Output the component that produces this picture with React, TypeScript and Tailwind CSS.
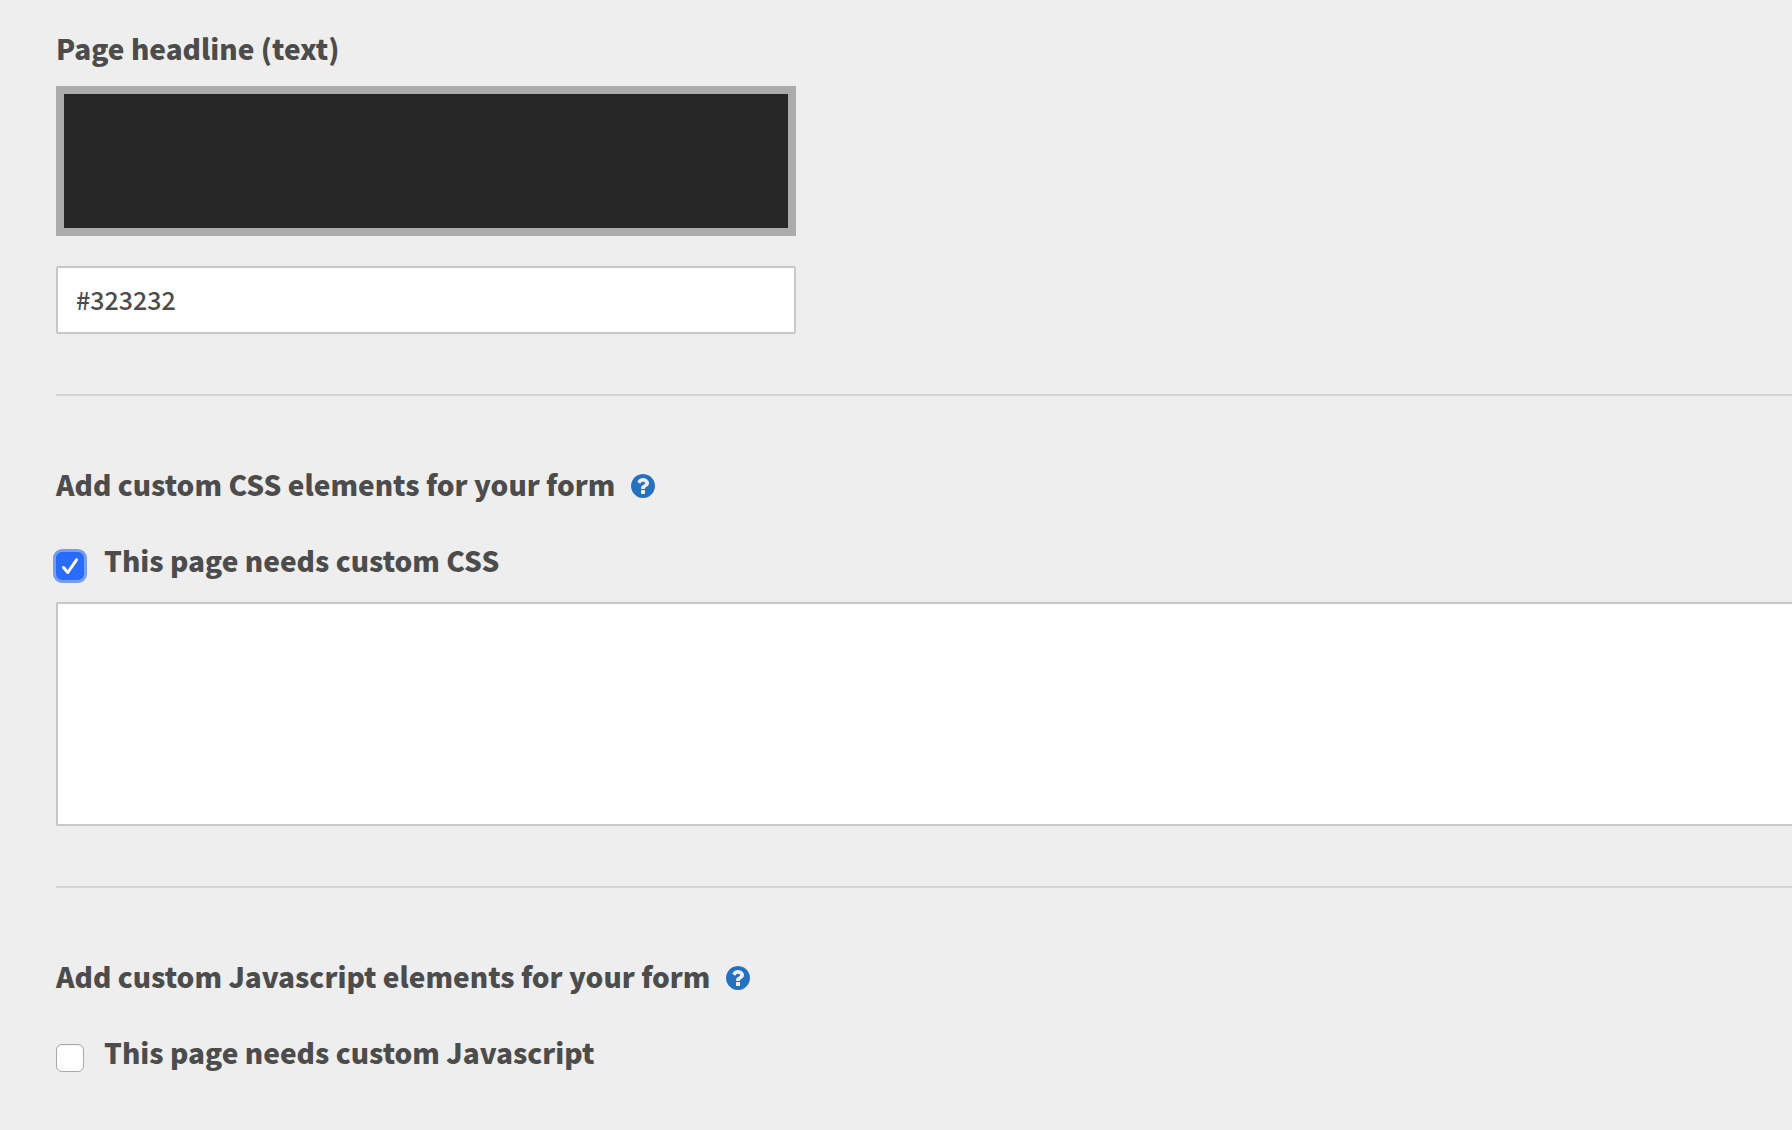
import { useState, type ReactNode } from 'react';

interface CustomCodeSectionProps {
    id: string;
    title: string;
    label: string;
    defaultChecked?: boolean;
}

function HelpIcon() {
    return (
        <svg viewBox="128 128 1536 1536" className="size-6 fill-current" aria-hidden="true">
            <path d="M1024 1376v-192q0-14-9-23t-23-9H800q-14 0-23 9t-9 23v192q0 14 9 23t23 9h192q14 0 23-9t9-23zm256-672q0-88-55.5-163T1086 425t-170-41q-243 0-371 213-15 24 8 42l132 100q7 6 19 6 16 0 25-12 53-68 86-92 34-24 86-24 48 0 85.5 26t37.5 59q0 38-20 61t-68 45q-63 28-115.5 86.5T768 1020v36q0 14 9 23t23 9h192q14 0 23-9t9-23q0-19 21.5-49.5T1100 957q32-18 49-28.5t46-35 44.5-48 28-60.5 12.500-81zm384 192q0 209-103 385.500T1281.500 1561 896 1664t-385.500-103T231 1281.500 128 896t103-385.500T510.500 231 896 128t385.500 103T1561 510.500 1664 896z" />
        </svg>
    );
}

function Section({ children }: { children: ReactNode }) {
    return <section className="mt-15 border-t-2 border-[#d4d4d4] pt-17">{children}</section>;
}

function CustomCodeSection({ id, title, label, defaultChecked = false }: CustomCodeSectionProps) {
    const [enabled, setEnabled] = useState(defaultChecked);

    return (
        <Section>
            <div className="flex items-center gap-4">
                <h2 className="font-black">{title}</h2>
                <button type="button" aria-label={`Help: ${title}`} className="pt-1 text-[#2571c0]">
                    <HelpIcon />
                </button>
            </div>
            <div className="mt-9 flex items-end gap-5">
                <span className="grid size-7">
                    <input
                        id={id}
                        type="checkbox"
                        checked={enabled}
                        onChange={(e) => setEnabled(e.target.checked)}
                        className="peer col-start-1 row-start-1 size-7 appearance-none rounded-md border border-[#a8a8a8] bg-white outline-none inset-shadow-xs checked:border-[#296cfb] checked:bg-[#296cfb] checked:ring-3 checked:ring-[#759eec]"
                    />
                    <svg
                        viewBox="0 0 28 28"
                        className="pointer-events-none col-start-1 row-start-1 hidden size-7 fill-none stroke-white stroke-3 peer-checked:block"
                        aria-hidden="true"
                    >
                        <path d="M7.500 15.500L11.800 20.500L20.500 7.800" strokeLinecap="round" strokeLinejoin="round" />
                    </svg>
                </span>
                <label htmlFor={id} className="font-black">
                    {label}
                </label>
            </div>
            {enabled && (
                <textarea
                    aria-label={title}
                    className="mt-[22px] block h-56 w-full resize-none rounded-l-xs border-2 border-r-0 border-[#c8c7cc] bg-white px-[18px] py-3 text-[25px] outline-none"
                />
            )}
        </Section>
    );
}

export default function App() {
    const [color, setColor] = useState('#323232');

    return (
        <main className="min-h-screen bg-[#eeeeee] pt-7 pb-12 pl-14 font-['Noto_Sans_CJK_SC',sans-serif] text-[28px] leading-10 text-[#4c4c4c]">
            <form>
                <div className="max-w-[740px]">
                    <label htmlFor="headline-color" className="block font-black">
                        Page headline (text)
                    </label>
                    <div className="mt-[18px] h-[150px] border-8 border-[#ababab] bg-[#262626]" />
                    <input
                        id="headline-color"
                        type="text"
                        value={color}
                        onChange={(e) => setColor(e.target.value)}
                        className="mt-[30px] block h-[68px] w-full rounded-xs border-2 border-[#c8c7cc] bg-white px-[18px] pb-0.5 text-[25px] font-medium outline-none"
                    />
                </div>
                <CustomCodeSection
                    id="custom-css"
                    title="Add custom CSS elements for your form"
                    label="This page needs custom CSS"
                    defaultChecked
                />
                <CustomCodeSection
                    id="custom-js"
                    title="Add custom Javascript elements for your form"
                    label="This page needs custom Javascript"
                />
            </form>
        </main>
    );
}
